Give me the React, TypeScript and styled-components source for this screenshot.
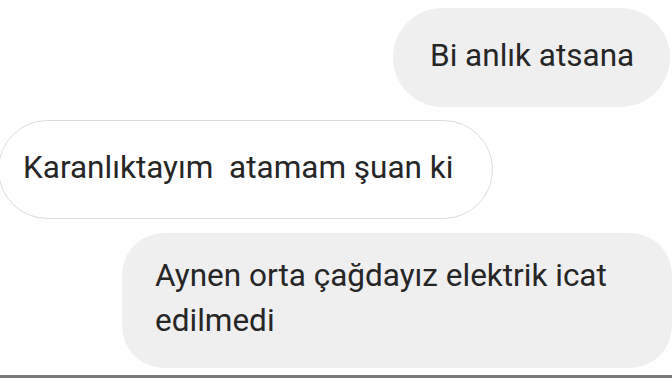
import React from "react";
import styled, { createGlobalStyle } from "styled-components";

const Global = createGlobalStyle`
  html, body { margin: 0; padding: 0; background: #ffffff; }
  body { width: 672px; height: 378px; overflow: hidden; }
`;

const Screen = styled.div`
  width: 672px;
  height: 378px;
  display: flex;
  flex-direction: column;
  box-sizing: border-box;
  padding-top: 8px;
  border-bottom: 3px solid #7a7a7a;
  overflow: hidden;
  font-family: Roboto, "Liberation Sans", sans-serif;
  color: #262626;
`;

const Row = styled.div<{ $side: "left" | "right"; $gap: number }>`
  display: flex;
  justify-content: ${(p) => (p.$side === "right" ? "flex-end" : "flex-start")};
  margin-top: ${(p) => p.$gap}px;
`;

const Bubble = styled.div<{ $variant: "sent" | "received" }>`
  box-sizing: border-box;
  display: flex;
  align-items: center;
  background: ${(p) => (p.$variant === "sent" ? "#efefef" : "#ffffff")};
  border: ${(p) => (p.$variant === "sent" ? "none" : "1.5px solid #dcdcdc")};
  font-size: 31.5px;
  line-height: 45px;
  letter-spacing: 0;
  white-space: pre-wrap;
`;

const ShortBubble = styled(Bubble)<{ $w: number; $offset: number }>`
  width: ${(p) => p.$w}px;
  height: 99px;
  border-radius: 50px;
  padding-left: ${(p) => p.$offset}px;
  padding-bottom: 5px;
  margin: ${(p) => (p.$variant === "sent" ? "0 2px 0 0" : "0 0 0 -2px")};
`;

const LongBubble = styled(Bubble)`
  width: 550px;
  height: 135px;
  border-radius: 42px;
  padding: 0 40px 6px 33px;
  margin-right: 0;
`;

export default function App() {
  return (
    <>
      <Global />
      <Screen>
        <Row $side="right" $gap={0}>
          <ShortBubble $variant="sent" $w={277} $offset={37}>
            Bi anlık atsana
          </ShortBubble>
        </Row>
        <Row $side="left" $gap={13}>
          <ShortBubble $variant="received" $w={495} $offset={24}>
            Karanlıktayım  atamam şuan ki
          </ShortBubble>
        </Row>
        <Row $side="right" $gap={14}>
          <LongBubble $variant="sent">
            Aynen orta çağdayız elektrik icat edilmedi
          </LongBubble>
        </Row>
      </Screen>
    </>
  );
}
